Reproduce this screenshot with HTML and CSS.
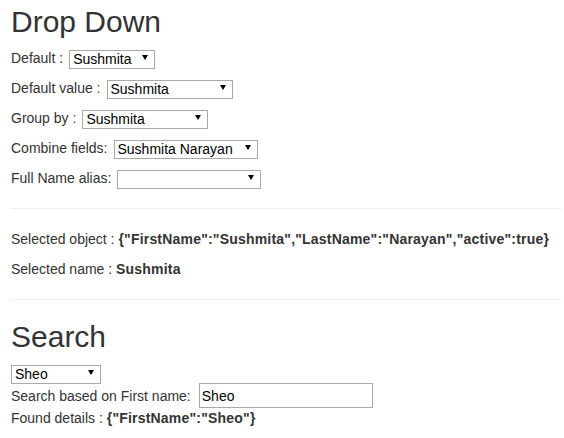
FILE: index.html
```html
<!DOCTYPE html>
<html lang="en">
<head>
  <meta charset="UTF-8" />
  <title>Drop Down</title>
  <link rel="stylesheet" href="styles.css">
</head>
<body>
  <div class="page">
    <h2 class="section-title first">Drop Down</h2>

    <div class="field">
      <label>Default :</label>
      <span class="pick sel-default">
        <select>
          <option selected>Sushmita</option>
          <option>Sheo</option>
        </select>
      </span>
    </div>

    <div class="field">
      <label>Default value :</label>
      <span class="pick sel-value">
        <select>
          <option selected>Sushmita</option>
          <option>Sheo</option>
        </select>
      </span>
    </div>

    <div class="field">
      <label>Group by :</label>
      <span class="pick sel-group">
        <select>
          <option selected>Sushmita</option>
          <option>Sheo</option>
        </select>
      </span>
    </div>

    <div class="field">
      <label>Combine fields:</label>
      <span class="pick sel-combine">
        <select>
          <option selected>Sushmita Narayan</option>
          <option>Sheo Narayan</option>
        </select>
      </span>
    </div>

    <div class="field">
      <label>Full Name alias:</label>
      <span class="pick sel-alias">
        <select>
          <option selected></option>
          <option>Sushmita Narayan</option>
        </select>
      </span>
    </div>

    <hr>

    <p class="info">Selected object : <b>{"FirstName":"Sushmita","LastName":"Narayan","active":true}</b></p>
    <p class="info">Selected name : <b>Sushmita</b></p>

    <hr>

    <h2 class="section-title">Search</h2>

    <div class="line">
      <span class="pick sel-search">
        <select>
          <option selected>Sheo</option>
          <option>Sushmita</option>
        </select>
      </span>
    </div>

    <div class="line tall">
      <label for="firstName">Search based on First name:</label>
      <input type="text" id="firstName" value="Sheo" />
    </div>

    <div class="line">Found details :&nbsp;<b>{"FirstName":"Sheo"}</b></div>
  </div>
</body>
</html>
```

FILE: styles.css
```css
* {
  box-sizing: border-box;
}

body {
  margin: 0;
  font-family: "Liberation Sans", Arial, sans-serif;
  font-size: 14px;
  line-height: 20px;
  color: #333;
  background: #fff;
}

.page {
  padding: 0 2px 0 11px;
}

.section-title {
  font-size: 30px;
  font-weight: 500;
  line-height: 33px;
  margin: 20px 0 10px;
}

.section-title.first {
  margin-top: 5px;
}

.field {
  display: flex;
  align-items: center;
  gap: 6px;
  height: 20px;
  margin-bottom: 10px;
}

.pick {
  position: relative;
  display: inline-block;
  height: 19px;
}

.pick select {
  appearance: none;
  -webkit-appearance: none;
  width: 100%;
  height: 19px;
  margin: 0;
  padding: 0 16px 0 3px;
  border: 1px solid #aaa;
  border-radius: 0;
  background: #fff;
  color: #000;
  font-family: inherit;
  font-size: 14px;
  line-height: 17px;
  outline: none;
}

.pick::after {
  content: "";
  position: absolute;
  right: 7px;
  top: 6px;
  border-left: 3px solid transparent;
  border-right: 3px solid transparent;
  border-top: 5px solid #000;
  pointer-events: none;
}

.sel-default { width: 86px; }
.sel-value { width: 126px; }
.sel-group { width: 126px; }
.sel-combine { width: 144px; }
.sel-alias { width: 144px; }
.sel-search { width: 90px; }

hr {
  margin: 20px 0;
  border: 0;
  border-top: 1px solid #eee;
}

.info {
  margin: 0 0 10px;
}

b {
  font-weight: bold;
  letter-spacing: 0.2px;
}

.line {
  display: flex;
  align-items: center;
  height: 20px;
}

.line.tall {
  height: 25px;
  gap: 8px;
}

input[type="text"] {
  width: 174px;
  height: 25px;
  margin: 0;
  padding: 0 2px;
  border: 1px solid #a9a9a9;
  border-radius: 0;
  color: #000;
  font-family: inherit;
  font-size: 14px;
  outline: none;
}
```
